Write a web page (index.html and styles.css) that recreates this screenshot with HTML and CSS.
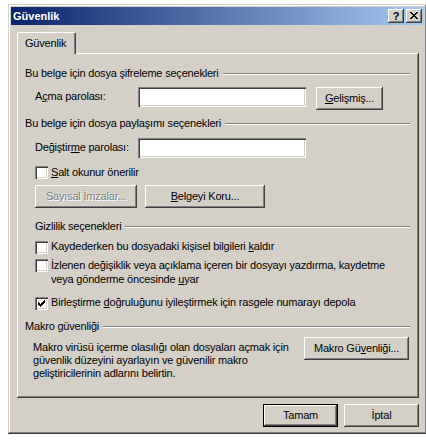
FILE: index.html
```html
<!DOCTYPE html>
<html lang="tr">
<head>
<meta charset="utf-8">
<title>Güvenlik</title>
<link rel="stylesheet" href="styles.css">
</head>
<body>
<div class="window">
  <div class="titlebar">
    <span class="title">Güvenlik</span>
    <div class="tbtns">
      <span class="tbtn help">?</span>
      <span class="tbtn">
        <svg width="16" height="14" viewBox="0 0 16 14" shape-rendering="crispEdges">
          <g fill="#000">
            <rect x="4" y="3" width="2" height="1"/><rect x="10" y="3" width="2" height="1"/>
            <rect x="5" y="4" width="2" height="1"/><rect x="9" y="4" width="2" height="1"/>
            <rect x="6" y="5" width="4" height="1"/>
            <rect x="7" y="6" width="2" height="1"/>
            <rect x="6" y="7" width="4" height="1"/>
            <rect x="5" y="8" width="2" height="1"/><rect x="9" y="8" width="2" height="1"/>
            <rect x="4" y="9" width="2" height="1"/><rect x="10" y="9" width="2" height="1"/>
          </g>
        </svg>
      </span>
    </div>
  </div>
  <div class="client">
    <div class="tabs"><div class="tab">Güvenlik</div></div>
    <div class="panel">
      <div class="grp">Bu belge için dosya şifreleme seçenekleri</div>
      <div class="row r1">
        <span class="lbl">A<u>ç</u>ma parolası:</span>
        <span class="edit"></span>
        <span class="btn b-adv"><u>G</u>elişmiş...</span>
      </div>
      <div class="grp g2">Bu belge için dosya paylaşımı seçenekleri</div>
      <div class="row r2">
        <span class="lbl">Değiştir<u>m</u>e parolası:</span>
        <span class="edit"></span>
      </div>
      <div class="chk c0"><span class="cb"></span><span><u>S</u>alt okunur önerilir</span></div>
      <div class="btnrow">
        <span class="btn b-sig disabled">Sayısal İmzalar...</span>
        <span class="btn b-prot"><u>B</u>elgeyi Koru...</span>
      </div>
      <div class="grp g3">Gizlilik seçenekleri</div>
      <div class="chk c1"><span class="cb"></span><span>Kaydederken bu dosyadaki kişisel bilgileri <u>k</u>aldır</span></div>
      <div class="chk c2"><span class="cb"></span><span class="multi">İzlenen değişiklik veya açıklama içeren bir dosyayı yazdırma, kaydetme<br>veya gönderme öncesinde <u>u</u>yar</span></div>
      <div class="chk c3"><span class="cb checked">
        <svg width="13" height="13" viewBox="0 0 13 13" shape-rendering="crispEdges">
          <g fill="#000">
            <rect x="3" y="5" width="1" height="3"/>
            <rect x="4" y="6" width="1" height="3"/>
            <rect x="5" y="7" width="1" height="3"/>
            <rect x="6" y="6" width="1" height="3"/>
            <rect x="7" y="5" width="1" height="3"/>
            <rect x="8" y="4" width="1" height="3"/>
            <rect x="9" y="3" width="1" height="3"/>
          </g>
        </svg>
      </span><span>Birleştirme <u>d</u>oğruluğunu iyileştirmek için rasgele numarayı depola</span></div>
      <div class="grp g4">Makro güvenliği</div>
      <div class="macro">
        <p class="mtext">Makro virüsü içerme olasılığı olan dosyaları açmak için<br>güvenlik düzeyini ayarlayın ve güvenilir makro<br>geliştiricilerinin adlarını belirtin.</p>
        <span class="btn b-mac">Makro Gü<u>v</u>enliği...</span>
      </div>
    </div>
    <div class="footer">
      <span class="btn default">Tamam</span>
      <span class="btn">İptal</span>
    </div>
  </div>
</div>
</body>
</html>
```
FILE: styles.css
```css
html, body {
  margin: 0;
  padding: 0;
  background: #fff;
  overflow: hidden;
}
body {
  font-family: "Liberation Sans", Arial, sans-serif;
  font-size: 11px;
  line-height: 13px;
  letter-spacing: -0.2px;
  color: #000;
}
u { text-underline-offset: 1px; }

.window {
  margin: 4px 0 0 8px;
  width: 419px;
  height: 430px;
  box-sizing: border-box;
  padding: 3px;
  background: #d4d0c8;
  box-shadow: inset -1px -1px #404040, inset 1px 1px #d4d0c8, inset -2px -2px #808080, inset 2px 2px #fff;
  display: flex;
  flex-direction: column;
}

.titlebar {
  height: 18px;
  flex: none;
  background: linear-gradient(90deg, #0a246a, #a6caf0);
  display: flex;
  align-items: center;
  padding: 0 2px 0 2px;
}
.title {
  flex: 1;
  color: #fff;
  font-weight: bold;
  letter-spacing: 0;
}
.tbtns {
  display: flex;
  gap: 2px;
}
.tbtn {
  width: 16px;
  height: 14px;
  background: #d4d0c8;
  box-shadow: inset -1px -1px #404040, inset 1px 1px #fff, inset -2px -2px #808080;
  display: flex;
  align-items: center;
  justify-content: center;
}
.tbtn svg { display: block; }
.help {
  font-weight: bold;
  font-size: 11px;
  line-height: 14px;
  letter-spacing: 0;
}

.client {
  flex: 1;
  display: flex;
  flex-direction: column;
  padding: 7px 5px 0 6px;
}

.tabs {
  display: flex;
  height: 21px;
}
.tab {
  width: 59px;
  height: 22px;
  box-sizing: border-box;
  position: relative;
  z-index: 1;
  background: #d4d0c8;
  border-top: 1px solid #fff;
  border-left: 1px solid #fff;
  border-right: 1px solid #404040;
  border-radius: 2px 2px 0 0;
  box-shadow: inset -1px 0 #808080;
  padding: 4px 0 0 7px;
}

.panel {
  width: 402px;
  height: 345px;
  flex: none;
  box-sizing: border-box;
  box-shadow: inset -1px -1px #404040, inset 1px 1px #fff, inset -2px -2px #808080;
  padding: 14px 9px 0 8px;
}

.grp {
  display: flex;
  align-items: flex-start;
  height: 13px;
  white-space: nowrap;
}
.grp::after {
  content: "";
  flex: 1;
  height: 0;
  margin: 6px 0 0 4px;
  border-top: 1px solid #808080;
  border-bottom: 1px solid #fff;
}
.g2 { margin-top: 7px; }
.g3 { margin-top: 12px; margin-left: 10px; }
.g4 { margin-top: 10px; }

.row {
  display: flex;
  align-items: flex-start;
  margin-left: 10px;
}
.r1 { margin-top: 7px; height: 23px; }
.r2 { margin-top: 8px; height: 20px; }
.lbl {
  width: 103px;
  flex: none;
  padding-top: 3px;
}
.edit {
  width: 168px;
  height: 20px;
  flex: none;
  background: #fff;
  box-shadow: inset 1px 1px #808080, inset 2px 2px #404040, inset -1px -1px #fff, inset -2px -2px #d4d0c8;
}

.btn {
  height: 23px;
  box-sizing: border-box;
  display: flex;
  align-items: center;
  justify-content: center;
  background: #d4d0c8;
  box-shadow: inset -1px -1px #404040, inset 1px 1px #fff, inset -2px -2px #808080;
  white-space: nowrap;
  flex: none;
}
.b-adv { width: 67px; margin-left: 10px; }
.b-sig { width: 102px; }
.b-prot { width: 120px; }
.b-mac { width: 105px; margin-right: 1px; }
.disabled {
  color: #808080;
  text-shadow: 1px 1px 0 #fff;
}

.chk {
  display: flex;
  align-items: flex-start;
  margin-left: 10px;
}
.cb {
  width: 13px;
  height: 13px;
  flex: none;
  margin: 0 3px 0 0;
  background: #fff;
  box-shadow: inset 1px 1px #808080, inset 2px 2px #404040, inset -1px -1px #fff, inset -2px -2px #d4d0c8;
}
.cb svg { display: block; }
.c0 { margin-top: 8px; }
.c1 { margin-top: 7px; }
.c1 .cb { margin-top: 1px; }
.c2 { margin-top: 4px; }
.c2 .cb { margin-top: 1px; }
.c3 { margin-top: 10px; }
.c3 .cb { margin-top: 1px; }
.multi { line-height: 14px; }

.btnrow {
  display: flex;
  gap: 8px;
  margin: 6px 0 0 10px;
}

.macro {
  display: flex;
  align-items: flex-start;
  margin-top: 4px;
}
.mtext {
  flex: 1;
  margin: 4px 0 0 8px;
}

.footer {
  display: flex;
  justify-content: flex-end;
  gap: 6px;
  margin-top: 6px;
  width: 402px;
}
.footer .btn { width: 75px; }
.default {
  box-shadow: inset 0 0 0 1px #000, inset -2px -2px #404040, inset 2px 2px #fff, inset -3px -3px #808080;
}
```
